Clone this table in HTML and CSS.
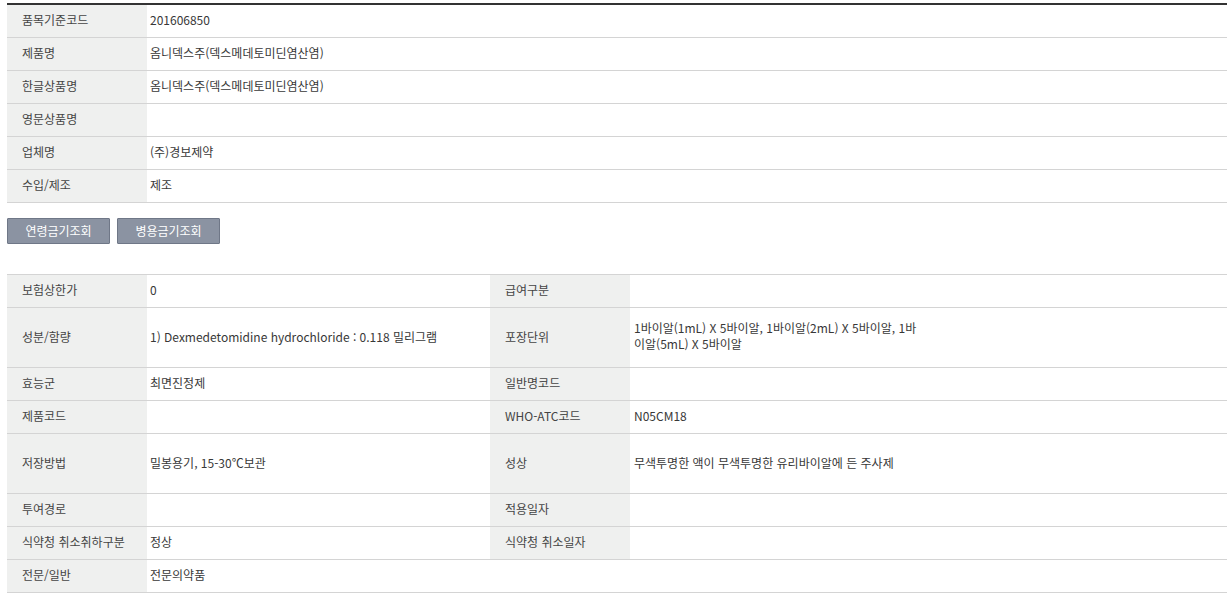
FILE: index.html
```html
<!DOCTYPE html>
<html lang="ko">
<head>
<meta charset="utf-8">
<title>제품 상세</title>
<link rel="stylesheet" href="styles.css">
</head>
<body>
<div class="page">
  <div class="info info-top">
    <div class="row"><div class="th">품목기준코드</div><div class="td">201606850</div></div>
    <div class="row"><div class="th">제품명</div><div class="td">옴니덱스주(덱스메데토미딘염산염)</div></div>
    <div class="row"><div class="th">한글상품명</div><div class="td">옴니덱스주(덱스메데토미딘염산염)</div></div>
    <div class="row"><div class="th">영문상품명</div><div class="td"></div></div>
    <div class="row"><div class="th">업체명</div><div class="td">(주)경보제약</div></div>
    <div class="row"><div class="th">수입/제조</div><div class="td">제조</div></div>
  </div>

  <div class="buttons">
    <button class="btn" type="button">연령금기조회</button>
    <button class="btn" type="button">병용금기조회</button>
  </div>

  <div class="info info-bottom">
    <div class="row"><div class="th">보험상한가</div><div class="td c1">0</div><div class="th">급여구분</div><div class="td c2"></div></div>
    <div class="row tall"><div class="th">성분/함량</div><div class="td c1">1) Dexmedetomidine hydrochloride : 0.118 밀리그램</div><div class="th">포장단위</div><div class="td c2"><span class="wrap">1바이알(1mL) X 5바이알, 1바이알(2mL) X 5바이알, 1바<br>이알(5mL) X 5바이알</span></div></div>
    <div class="row"><div class="th">효능군</div><div class="td c1">최면진정제</div><div class="th">일반명코드</div><div class="td c2"></div></div>
    <div class="row"><div class="th">제품코드</div><div class="td c1"></div><div class="th">WHO-ATC코드</div><div class="td c2">N05CM18</div></div>
    <div class="row tall"><div class="th">저장방법</div><div class="td c1">밀봉용기, 15-30℃보관</div><div class="th">성상</div><div class="td c2">무색투명한 액이 무색투명한 유리바이알에 든 주사제</div></div>
    <div class="row"><div class="th">투여경로</div><div class="td c1"></div><div class="th">적용일자</div><div class="td c2"></div></div>
    <div class="row"><div class="th">식약청 취소취하구분</div><div class="td c1">정상</div><div class="th">식약청 취소일자</div><div class="td c2"></div></div>
    <div class="row"><div class="th">전문/일반</div><div class="td">전문의약품</div></div>
  </div>
</div>
</body>
</html>
```

FILE: styles.css
```css
* { box-sizing: border-box; }
html, body { margin: 0; padding: 0; background: #fff; }
body {
  font-family: "Noto Sans CJK KR", "Liberation Sans", sans-serif;
  font-size: 12px;
  color: #383838;
}
.page {
  padding: 3px 0 0 7px;
  width: 1227px;
}
.info {
  width: 1220px;
}
.info-top { border-top: 2px solid #333; }
.info-bottom { border-top: 1px solid #d4d4d4; margin-top: 30px; }
.row {
  display: flex;
  height: 33px;
  border-bottom: 1px solid #d4d4d4;
}
.row.tall { height: 60px; }
.th {
  flex: 0 0 140px;
  background: #eff0ef;
  color: #444;
  padding: 0 0 3px 15px;
  display: flex;
  align-items: center;
  white-space: nowrap;
}
.td {
  flex: 1 1 auto;
  padding: 0 0 3px 3px;
  display: flex;
  align-items: center;
  white-space: nowrap;
}
.c1 { flex: 0 0 343px; }
.c2 { flex: 1 1 auto; padding-left: 4px; }
.wrap { line-height: 16px; }
.buttons {
  display: flex;
  gap: 7px;
  margin-top: 15px;
}
.btn {
  width: 103px;
  height: 26px;
  background: #8b93a2;
  border: 1px solid #6f7787;
  border-radius: 1px;
  color: #fff;
  font-family: "Noto Sans CJK KR", "Liberation Sans", sans-serif;
  font-size: 12px;
  padding: 0 0 2px;
  cursor: pointer;
}
```
